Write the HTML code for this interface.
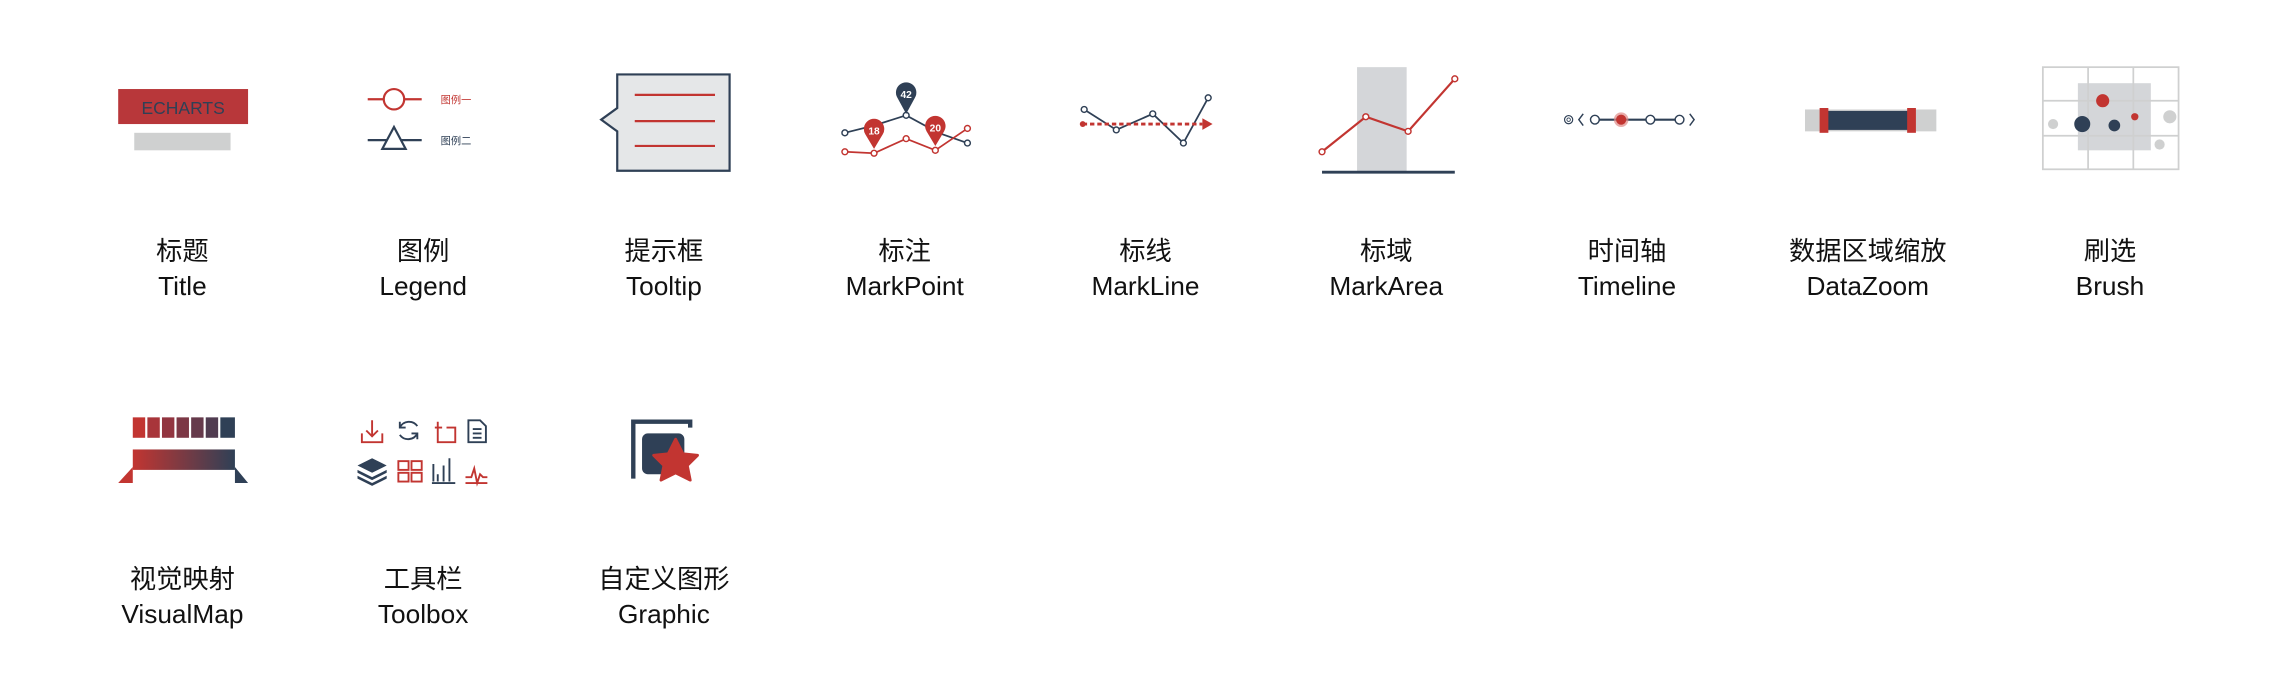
<!DOCTYPE html>
<html><head><meta charset="utf-8"><style>
html,body{margin:0;padding:0;background:#fff;}
svg{display:block;}
text{font-family:"Liberation Sans","Noto Sans CJK SC",sans-serif;}
.lb{font-size:18px;fill:#111;text-anchor:middle;}
</style></head><body>
<svg width="2288" height="692" viewBox="0 0 1568 474.2" xmlns="http://www.w3.org/2000/svg">
<defs>
<linearGradient id="vg" x1="0" x2="1"><stop offset="0" stop-color="#c23531"/><stop offset="1" stop-color="#2f4056"/></linearGradient>
</defs>
<!-- Title -->
<rect x="81" y="61" width="89" height="24" fill="#b8373a"/>
<text x="125.5" y="78" font-size="12" fill="#2f4056" text-anchor="middle">ECHARTS</text>
<rect x="92" y="91" width="66" height="12" fill="#cfd0d0"/>
<!-- Legend -->
<line x1="252" y1="68" x2="289" y2="68" stroke="#c23531" stroke-width="1.5"/>
<circle cx="270" cy="68" r="7" fill="#fff" stroke="#c23531" stroke-width="1.5"/>
<text x="302" y="71" font-size="7" fill="#c23531">图例一</text>
<line x1="252" y1="96" x2="289" y2="96" stroke="#2f4056" stroke-width="1.5"/>
<polygon points="270,87 262,102 278,102" fill="#fff" stroke="#2f4056" stroke-width="1.5"/>
<text x="302" y="99" font-size="7" fill="#2f4056">图例二</text>
<!-- Tooltip -->
<path d="M423,51 H500 V117 H423 V90 L412,82 L423,74 Z" fill="#e5e7e8" stroke="#2f4056" stroke-width="1.5"/>
<g stroke="#c23531" stroke-width="1.5"><line x1="435" y1="65" x2="490" y2="65"/><line x1="435" y1="83" x2="490" y2="83"/><line x1="435" y1="100" x2="490" y2="100"/></g>
<!-- MarkPoint -->
<polyline points="579,91 599,86 621,79 643,91 663,98" fill="none" stroke="#2f4056" stroke-width="1.2"/>
<polyline points="579,104 599,105 621,95 641,103 663,88" fill="none" stroke="#c23531" stroke-width="1.2"/>
<g fill="#fff" stroke-width="1"><circle cx="579" cy="91" r="2" stroke="#2f4056"/><circle cx="621" cy="79" r="2" stroke="#2f4056"/><circle cx="663" cy="98" r="2" stroke="#2f4056"/><circle cx="579" cy="104" r="2" stroke="#c23531"/><circle cx="599" cy="105" r="2" stroke="#c23531"/><circle cx="621" cy="95" r="2" stroke="#c23531"/><circle cx="641" cy="103" r="2" stroke="#c23531"/><circle cx="663" cy="88" r="2" stroke="#c23531"/></g>
<path d="M621,78 L615,67 A7,7 0 1 1 627,67 Z" fill="#2f4056"/>
<text x="621" y="67" font-size="7" fill="#fff" text-anchor="middle" font-weight="bold">42</text>
<path d="M599,102 L593,92 A7,7 0 1 1 605,92 Z" fill="#c23531"/>
<text x="599" y="92" font-size="7" fill="#fff" text-anchor="middle" font-weight="bold">18</text>
<path d="M641,100 L635,90 A7,7 0 1 1 647,90 Z" fill="#c23531"/>
<text x="641" y="90" font-size="7" fill="#fff" text-anchor="middle" font-weight="bold">20</text>
<!-- MarkLine -->
<polyline points="743,75 765,89 790,78 811,98 828,67" fill="none" stroke="#2f4056" stroke-width="1.2"/>
<g fill="#fff" stroke="#2f4056"><circle cx="743" cy="75" r="2"/><circle cx="765" cy="89" r="2"/><circle cx="790" cy="78" r="2"/><circle cx="811" cy="98" r="2"/><circle cx="828" cy="67" r="2"/></g>
<line x1="742" y1="85" x2="824" y2="85" stroke="#c23531" stroke-width="2" stroke-dasharray="3,2"/>
<circle cx="742" cy="85" r="2" fill="#c23531"/>
<polygon points="824,81 831,85 824,89" fill="#c23531"/>
<!-- MarkArea -->
<rect x="930" y="46" width="34" height="72" fill="#d4d6d9"/>
<line x1="906" y1="118" x2="997" y2="118" stroke="#2f4056" stroke-width="2"/>
<polyline points="906,104 936,80 965,90 997,54" fill="none" stroke="#c23531" stroke-width="1.5"/>
<g fill="#fff" stroke="#c23531"><circle cx="906" cy="104" r="2"/><circle cx="936" cy="80" r="2"/><circle cx="965" cy="90" r="2"/><circle cx="997" cy="54" r="2"/></g>
<!-- Timeline -->
<line x1="1093" y1="82" x2="1151" y2="82" stroke="#2f4056" stroke-width="1.5"/>
<circle cx="1075" cy="82" r="2.8" fill="#fff" stroke="#2f4056" stroke-width="0.8"/><circle cx="1075" cy="82" r="1.2" fill="none" stroke="#2f4056" stroke-width="0.6"/>
<path d="M1085,78 L1082,82 L1085,86" fill="none" stroke="#2f4056"/>
<path d="M1158,78 L1161,82 L1158,86" fill="none" stroke="#2f4056"/>
<circle cx="1093" cy="82" r="3" fill="#fff" stroke="#2f4056"/>
<circle cx="1111" cy="82" r="5" fill="#e08a88" opacity="0.7"/><circle cx="1111" cy="82" r="3.5" fill="#c23531"/>
<circle cx="1131" cy="82" r="3" fill="#fff" stroke="#2f4056"/>
<circle cx="1151" cy="82" r="3" fill="#fff" stroke="#2f4056"/>
<!-- DataZoom -->
<rect x="1237" y="75" width="90" height="15" fill="#cfd0d0"/>
<rect x="1250" y="76" width="60" height="13" fill="#2f4056"/>
<rect x="1247" y="74" width="6" height="17" fill="#c23531"/>
<rect x="1307" y="74" width="6" height="17" fill="#c23531"/>
<!-- Brush -->
<rect x="1424" y="57" width="50" height="46" fill="#d4d6d9"/>
<g fill="none" stroke="#cfd0d0" stroke-width="1.2"><rect x="1400" y="46" width="93" height="70"/><line x1="1431" y1="46" x2="1431" y2="116"/><line x1="1462" y1="46" x2="1462" y2="116"/><line x1="1400" y1="69" x2="1493" y2="69"/><line x1="1400" y1="93" x2="1493" y2="93"/></g>
<circle cx="1441" cy="69" r="4.5" fill="#c23531"/>
<circle cx="1427" cy="85" r="5.5" fill="#2f4056"/>
<circle cx="1449" cy="86" r="4" fill="#2f4056"/>
<circle cx="1463" cy="80" r="2.5" fill="#c23531"/>
<circle cx="1407" cy="85" r="3.5" fill="#cfd0d0"/>
<circle cx="1487" cy="80" r="4.5" fill="#cfd0d0"/>
<circle cx="1480" cy="99" r="3.5" fill="#cfd0d0"/>
<!-- VisualMap -->
<rect x="91" y="286" width="8.5" height="14" fill="#c23531"/>
<rect x="101" y="286" width="8.5" height="14" fill="#a8353a"/>
<rect x="111" y="286" width="8.5" height="14" fill="#923540"/>
<rect x="121" y="286" width="8.5" height="14" fill="#7c3745"/>
<rect x="131" y="286" width="8.5" height="14" fill="#663a4b"/>
<rect x="141" y="286" width="8.5" height="14" fill="#503c50"/>
<rect x="151" y="286" width="10" height="14" fill="#2f4056"/>
<rect x="91" y="308" width="70" height="14" fill="url(#vg)"/>
<polygon points="81,331 91,320 91,331" fill="#c23531"/>
<polygon points="161,320 170,331 161,331" fill="#2f4056"/>
<!-- Toolbox -->
<g fill="none" stroke="#c23531" stroke-width="1.3">
<path d="M255,288 V299 M251,295 L255,299 L259,295 M248,297 V303 H262 V297"/>
<path d="M298,293 H303 M300,289 V303 H312 V293 H306"/>
<rect x="273" y="316" width="7" height="6"/><rect x="282" y="316" width="7" height="6"/><rect x="273" y="324" width="7" height="6"/><rect x="282" y="324" width="7" height="6"/>
<path d="M319,327 H323 L325,321 L327,331 L329,325 L331,327 H334 M319,331 H334"/>
</g>
<g fill="none" stroke="#2f4056" stroke-width="1.3">
<path d="M286,292 A7,7 0 0 0 274,293 M274,298 A7,7 0 0 0 286,297"/>
<path d="M274,289 V293 H278 M286,301 V297 H282"/>
<path d="M321,288 H329 L333,292 V303 H321 Z M324,294 H330 M324,297 H330 M324,300 H330"/>
<path d="M297,318 V330 M300,325 V330 M304,319 V330 M308,314 V330 M296,331 H312"/>
</g>
<g fill="#2f4056"><path d="M255,314 L265,319 L255,324 L245,319 Z"/><path d="M245,322 L255,327 L265,322 V324 L255,329 L245,324 Z"/><path d="M245,326 L255,331 L265,326 V328 L255,333 L245,328 Z"/></g>
<!-- Graphic -->
<path d="M434,328 V289 H473 V293" fill="none" stroke="#2f4056" stroke-width="3"/>
<rect x="440" y="297" width="29" height="28" rx="4" fill="#2f4056"/>
<path d="M463,301 L468,311 L478,312 L471,319 L473,329 L463,324 L453,329 L455,319 L448,312 L458,311 Z" fill="#c23531" stroke="#c23531" stroke-width="2" stroke-linejoin="round"/>
<!-- Labels -->
<g class="lb">
<text class="lb" x="125" y="178">标题</text><text class="lb" x="125" y="202">Title</text>
<text class="lb" x="290" y="178">图例</text><text class="lb" x="290" y="202">Legend</text>
<text class="lb" x="455" y="178">提示框</text><text class="lb" x="455" y="202">Tooltip</text>
<text class="lb" x="620" y="178">标注</text><text class="lb" x="620" y="202">MarkPoint</text>
<text class="lb" x="785" y="178">标线</text><text class="lb" x="785" y="202">MarkLine</text>
<text class="lb" x="950" y="178">标域</text><text class="lb" x="950" y="202">MarkArea</text>
<text class="lb" x="1115" y="178">时间轴</text><text class="lb" x="1115" y="202">Timeline</text>
<text class="lb" x="1280" y="178">数据区域缩放</text><text class="lb" x="1280" y="202">DataZoom</text>
<text class="lb" x="1446" y="178">刷选</text><text class="lb" x="1446" y="202">Brush</text>
<text class="lb" x="125" y="403">视觉映射</text><text class="lb" x="125" y="427">VisualMap</text>
<text class="lb" x="290" y="403">工具栏</text><text class="lb" x="290" y="427">Toolbox</text>
<text class="lb" x="455" y="403">自定义图形</text><text class="lb" x="455" y="427">Graphic</text>
</g>
</svg>
</body></html>
